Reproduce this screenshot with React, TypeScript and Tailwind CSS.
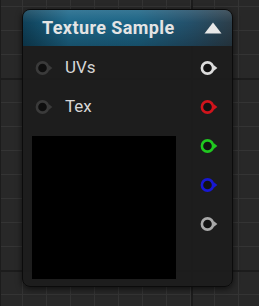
import React from 'react';

// Unreal-style material graph node: "Texture Sample"

type PinProps = {
  color: string;
  fill?: string;
};

function Pin({ color, fill = '#121212' }: PinProps) {
  return (
    <svg width="20" height="16" viewBox="0 0 20 16" className="block shrink-0">
      <circle cx="7.5" cy="8" r="5.6" fill={fill} stroke={color} strokeWidth="2.6" />
      <polygon points="13.6,5 17.4,8 13.6,11" fill={color} />
    </svg>
  );
}

const outputs = ['#dcdcdc', '#d0141c', '#20c820', '#1818d2', '#a9a9a9'];

export default function App() {
  return (
    <div
      className="relative h-screen w-full overflow-hidden bg-[#282828] [background-image:linear-gradient(#1c1c1c_2px,transparent_2px),linear-gradient(90deg,#1c1c1c_2px,transparent_2px),linear-gradient(#343434_1px,transparent_1px),linear-gradient(90deg,#343434_1px,transparent_1px)] [background-size:192px_192px,192px_192px,24px_24px,24px_24px] [background-position:0_78px,-1px_0,0_6px,-2px_0]"
      style={{ fontFamily: 'Roboto, "Noto Sans", sans-serif' }}
    >
      <div className="absolute left-[22px] top-[9px] flex h-[278px] w-[211px] flex-col overflow-hidden rounded-[8px] border border-[#0b0b0b] bg-[#1c1c1c]/95 shadow-[0_2px_6px_rgba(0,0,0,0.6)]">
        {/* header */}
        <div className="relative flex h-[36px] shrink-0 items-center justify-between bg-[linear-gradient(to_right,#0f4058,#1d6789_22%,#1c6485_55%,#24506a_80%,#2c3e4a)] pl-[19px] pr-[10px]">
          <div className="absolute inset-0 bg-[linear-gradient(to_bottom,rgba(255,255,255,0.12),rgba(255,255,255,0)_35%,rgba(0,0,0,0.22))]" />
          <span className="relative text-[18px] font-bold leading-none tracking-[0.4px] text-[#e4e4e4]">
            Texture Sample
          </span>
          <svg width="18" height="12" viewBox="0 0 18 12" className="relative mt-[-1px]">
            <polygon points="9,0.5 17.5,11.5 0.5,11.5" fill="#e8e8e8" />
          </svg>
        </div>

        {/* body */}
        <div className="flex flex-1 pt-[2px]">
          <div className="flex flex-1 flex-col pl-[9px]">
            <div className="flex h-[39px] items-center gap-[10px] pl-[3px]">
              <Pin color="#3a3a3a" fill="#0e0e0e" />
              <span className="text-[17px] leading-none text-[#d6d6d6]">UVs</span>
            </div>
            <div className="flex h-[39px] items-center gap-[10px] pl-[3px]">
              <Pin color="#3a3a3a" fill="#0e0e0e" />
              <span className="text-[17px] leading-none text-[#d6d6d6]">Tex</span>
            </div>
            <div className="mt-[10px] h-[143px] w-[144px] bg-black" />
          </div>
          <div className="flex flex-col pr-[12px]">
            {outputs.map((c) => (
              <div key={c} className="flex h-[39px] items-center">
                <Pin color={c} />
              </div>
            ))}
          </div>
        </div>
      </div>
    </div>
  );
}
